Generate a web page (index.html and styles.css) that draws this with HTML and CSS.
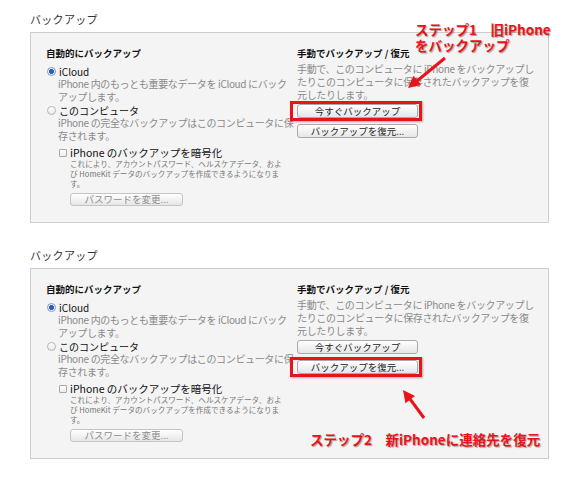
FILE: index.html
```html
<!DOCTYPE html>
<html>
<head>
    <title>バックアップ</title>
    <meta charset="UTF-8">
    <link rel="stylesheet" href="styles.css">
</head>
<body>
    <section class="block">
        <h2 class="title">バックアップ</h2>
        <div class="panel">
            <div class="col auto">
                <h3 class="head">自動的にバックアップ</h3>
                <div class="opt"><span class="radio on"></span>iCloud</div>
                <p class="desc">iPhone 内のもっとも重要なデータを iCloud にバック<br>アップします。</p>
                <div class="opt second"><span class="radio"></span>このコンピュータ</div>
                <p class="desc">iPhone の完全なバックアップはこのコンピュータに保<br>存されます。</p>
                <div class="check"><span class="box"></span>iPhone のバックアップを暗号化</div>
                <p class="small">これにより、アカウントパスワード、ヘルスケアデータ、およ<br>び HomeKit データのバックアップを作成できるようになりま<br>す。</p>
                <span class="btn off">パスワードを変更...</span>
            </div>
            <div class="col manual">
                <h3 class="head">手動でバックアップ / 復元</h3>
                <p class="desc">手動で、このコンピュータに iPhone をバックアップし<br>たりこのコンピュータに保存されたバックアップを復<br>元したりします。</p>
                <span class="btn first hl">今すぐバックアップ</span>
                <span class="btn next">バックアップを復元...</span>
            </div>
        </div>
        <div class="note one">ステップ1　旧iPhone<br>をバックアップ</div>
        <svg class="arrows" width="580" height="235">
            <line x1="445" y1="58" x2="417" y2="81" />
            <polygon points="408,88 421.1,85.1 413.5,75.7" />
        </svg>
    </section>

    <section class="block">
        <h2 class="title">バックアップ</h2>
        <div class="panel">
            <div class="col auto">
                <h3 class="head">自動的にバックアップ</h3>
                <div class="opt"><span class="radio on"></span>iCloud</div>
                <p class="desc">iPhone 内のもっとも重要なデータを iCloud にバック<br>アップします。</p>
                <div class="opt second"><span class="radio"></span>このコンピュータ</div>
                <p class="desc">iPhone の完全なバックアップはこのコンピュータに保<br>存されます。</p>
                <div class="check"><span class="box"></span>iPhone のバックアップを暗号化</div>
                <p class="small">これにより、アカウントパスワード、ヘルスケアデータ、およ<br>び HomeKit データのバックアップを作成できるようになりま<br>す。</p>
                <span class="btn off">パスワードを変更...</span>
            </div>
            <div class="col manual">
                <h3 class="head">手動でバックアップ / 復元</h3>
                <p class="desc">手動で、このコンピュータに iPhone をバックアップし<br>たりこのコンピュータに保存されたバックアップを復<br>元したりします。</p>
                <span class="btn first">今すぐバックアップ</span>
                <span class="btn next hl">バックアップを復元...</span>
            </div>
        </div>
        <div class="note two">ステップ2　新iPhoneに連絡先を復元</div>
        <svg class="arrows" width="580" height="235">
            <line x1="424" y1="182" x2="410" y2="163" />
            <polygon points="403,154 415,160 405.4,167.2" />
        </svg>
    </section>
</body>
</html>
```
FILE: styles.css
```css
body {
    margin: 0;
    background: #fff;
    font-family: 'Noto Sans CJK JP', 'Noto Sans', sans-serif;
    color: #222;
}
.block {
    position: relative;
    padding-top: 12px;
}
.block + .block {
    margin-top: 13px;
}
.title {
    margin: 0 0 6px 30px;
    font-size: 11px;
    font-weight: normal;
    line-height: 14px;
    letter-spacing: 0.3px;
    color: #333;
}
.panel {
    display: flex;
    margin-left: 30px;
    width: 517px;
    height: 189px;
    background-color: #f4f4f4;
    border: 1px solid #cdcdcd;
}
.col {
    display: flex;
    flex-direction: column;
    align-items: flex-start;
    padding-top: 14px;
}
.auto {
    width: 251px;
    padding-left: 15px;
}
.head {
    margin: 0;
    font-size: 9.5px;
    font-weight: bold;
    line-height: 13px;
    color: #111;
}
.desc {
    margin: 0;
    padding-left: 12px;
    font-size: 10px;
    line-height: 12.5px;
    letter-spacing: -0.35px;
    color: #8a8a8a;
    white-space: nowrap;
}
.manual .desc {
    padding-left: 0;
    margin-top: 2px;
    line-height: 13px;
}
.opt {
    display: flex;
    align-items: center;
    margin-top: 5px;
    font-size: 10px;
    line-height: 13px;
    color: #111;
}
.opt.second {
    margin-top: 1px;
}
.radio {
    box-sizing: border-box;
    width: 9px;
    height: 9px;
    margin: 0 3px 0 1px;
    border: 1px solid #b4b4b4;
    border-radius: 50%;
    background: linear-gradient(#fff, #e9e9e9);
}
.radio.on {
    border-color: #7d98c8;
    background: radial-gradient(circle, #2d5fb8 0, #2d5fb8 2.2px, #eef2fa 2.8px);
}
.check {
    display: flex;
    align-items: center;
    margin: 4px 0 0 13px;
    font-size: 10.5px;
    line-height: 13px;
    color: #111;
}
.box {
    box-sizing: border-box;
    width: 8px;
    height: 8px;
    margin-right: 3px;
    border: 1px solid #a8a8a8;
    border-radius: 1px;
    background: linear-gradient(#fff, #ececec);
}
.small {
    margin: 0 0 0 24px;
    font-size: 7.6px;
    line-height: 10px;
    color: #777;
    white-space: nowrap;
}
.btn {
    position: relative;
    display: block;
    box-sizing: border-box;
    width: 121px;
    height: 14px;
    border: 1px solid #a9a9a9;
    border-radius: 3px;
    background: linear-gradient(#fff, #e6e6e6);
    font-size: 9.5px;
    line-height: 12px;
    text-align: center;
    color: #222;
}
.btn.off {
    width: 113px;
    height: 13px;
    margin: 4px 0 0 24px;
    line-height: 11px;
    border-color: #c4c4c4;
    color: #8c8c8c;
}
.btn.first {
    margin-top: 3px;
}
.btn.next {
    margin-top: 6px;
}
.hl::after {
    content: "";
    position: absolute;
    left: -8px;
    right: -5px;
    top: -4px;
    bottom: -4px;
    border: 3px solid #e8141b;
    box-shadow: 1px 1px 2px rgba(0, 0, 0, 0.3);
}
.note {
    position: absolute;
    font-size: 13.5px;
    font-weight: bold;
    line-height: 16px;
    color: #e8141b;
    text-shadow: 1px 1px 1px rgba(0, 0, 0, 0.35);
    white-space: nowrap;
}
.note.one {
    left: 415px;
    top: 21px;
}
.note.two {
    left: 310px;
    top: 195px;
}
.arrows {
    position: absolute;
    left: 0;
    top: 0;
    pointer-events: none;
}
.arrows line {
    stroke: #e8141b;
    stroke-width: 3;
}
.arrows polygon {
    fill: #e8141b;
}
```
